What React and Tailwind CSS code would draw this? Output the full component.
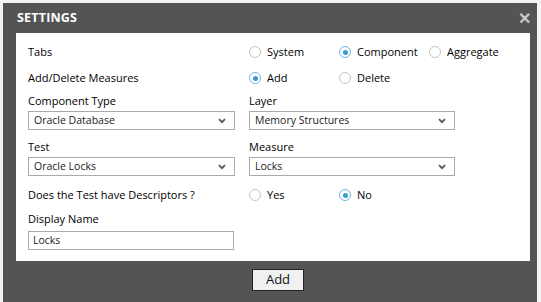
import React from "react";

const Radio = ({ label, checked }) => (
  <label className="flex w-[90px] items-center gap-[6px]">
    <span
      className={
        "flex h-[12px] w-[12px] items-center justify-center rounded-full border bg-white " +
        (checked ? "border-[#6bb7e0]" : "border-[#c4c4c4]")
      }
    >
      {checked && <span className="h-[5px] w-[5px] rounded-full bg-[#3d9ad1]" />}
    </span>
    <span>{label}</span>
  </label>
);

const Chevron = () => (
  <svg width="8" height="6" viewBox="0 0 8 6" className="mr-[8px]">
    <path d="M1 1.2 L4 4.2 L7 1.2" fill="none" stroke="#555" strokeWidth="1.8" />
  </svg>
);

const Select = ({ value, width }) => (
  <div
    className={
      "flex h-[19px] items-center justify-between border border-[#a9a9b0] bg-white pl-[5px] text-[10.5px] font-normal text-[#222] " +
      width
    }
  >
    <span>{value}</span>
    <Chevron />
  </div>
);

export default function App() {
  return (
    <div className="h-[302px] w-[541px] overflow-hidden bg-[#f3f3f3] font-['Open_Sans',sans-serif] text-[11px] font-medium text-black">
      <div className="ml-[3px] mt-[3px] h-[299px] w-[534px] bg-[#545454]">
        {/* title bar */}
        <div className="flex h-[30px] items-center justify-between pl-[14px] pr-[6px]">
          <span className="text-[12.5px] font-bold tracking-[0.2px] text-white">SETTINGS</span>
          <span className="text-[16px] font-bold leading-none text-[#c8c8c8]">✕</span>
        </div>

        {/* body */}
        <div className="ml-[13px] w-[514px] bg-white pb-[11px] pl-[12px] pt-[10px]">
          <div className="flex h-[18px] items-center">
            <div className="w-[221px]">Tabs</div>
            <Radio label="System" />
            <Radio label="Component" checked />
            <Radio label="Aggregate" />
          </div>
          <div className="mt-[8px] flex h-[18px] items-center">
            <div className="w-[221px]">Add/Delete Measures</div>
            <Radio label="Add" checked />
            <Radio label="Delete" />
          </div>

          <div className="mt-[6px] flex">
            <div className="w-[221px]">
              <div className="h-[15px] leading-[15px]">Component Type</div>
              <div className="mt-[3px]">
                <Select value="Oracle Database" width="w-[207px]" />
              </div>
            </div>
            <div>
              <div className="h-[15px] leading-[15px]">Layer</div>
              <div className="mt-[3px]">
                <Select value="Memory Structures" width="w-[206px]" />
              </div>
            </div>
          </div>

          <div className="mt-[9px] flex">
            <div className="w-[221px]">
              <div className="h-[15px] leading-[15px]">Test</div>
              <div className="mt-[3px]">
                <Select value="Oracle Locks" width="w-[207px]" />
              </div>
            </div>
            <div>
              <div className="h-[15px] leading-[15px]">Measure</div>
              <div className="mt-[3px]">
                <Select value="Locks" width="w-[206px]" />
              </div>
            </div>
          </div>

          <div className="mt-[10px] flex h-[18px] items-center">
            <div className="w-[221px]">Does the Test have Descriptors ?</div>
            <Radio label="Yes" />
            <Radio label="No" checked />
          </div>

          <div className="mt-[7px] h-[15px] leading-[15px]">Display Name</div>
          <div className="mt-[5px] flex h-[19px] w-[206px] items-center border border-[#a9a9b0] pl-[4px] text-[10.5px] font-normal text-[#222]">
            Locks
          </div>
        </div>

        {/* footer */}
        <div className="flex justify-center pl-[16px] pt-[8px]">
          <button className="h-[22px] w-[52px] border border-[#222] bg-[#f0f0f0] text-[13px] font-normal text-[#111]">
            Add
          </button>
        </div>
      </div>
    </div>
  );
}
